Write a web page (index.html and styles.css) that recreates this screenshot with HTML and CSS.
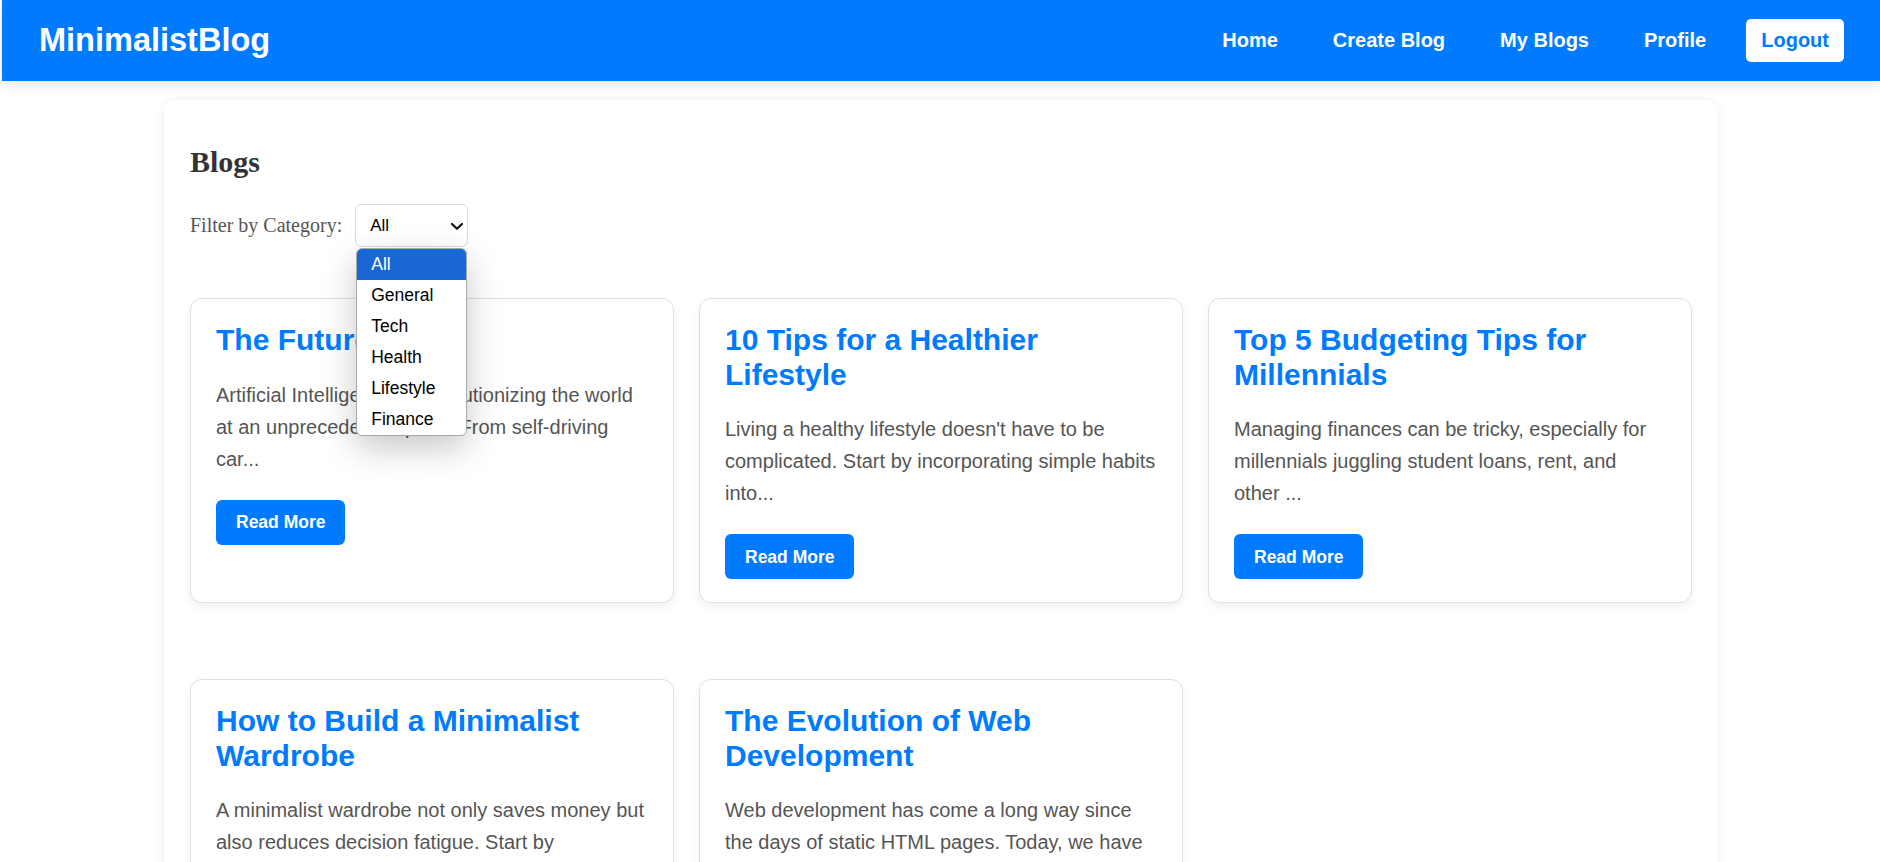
FILE: index.html
```html
<!DOCTYPE html>
<html lang="en">
<head>
<meta charset="utf-8">
<title>MinimalistBlog</title>
<link rel="stylesheet" href="styles.css">
</head>
<body>
<header class="topbar">
  <a class="logo" href="#">MinimalistBlog</a>
  <nav class="nav">
    <a class="nav-link" href="#">Home</a>
    <a class="nav-link" href="#">Create Blog</a>
    <a class="nav-link" href="#">My Blogs</a>
    <a class="nav-link" href="#">Profile</a>
    <a class="nav-link logout" href="#">Logout</a>
  </nav>
</header>

<main class="panel">
  <h2 class="panel-title">Blogs</h2>
  <div class="filter">
    <label class="filter-label" for="cat">Filter by Category:</label>
    <div class="select-wrap">
      <select id="cat" class="select">
        <option>All</option>
        <option>General</option>
        <option>Tech</option>
        <option>Health</option>
        <option>Lifestyle</option>
        <option>Finance</option>
      </select>
      <svg class="chevron" width="12" height="7" viewBox="0 0 12 7"><polyline points="1,1 6,5.8 11,1" fill="none" stroke="#111" stroke-width="2.2" stroke-linecap="round" stroke-linejoin="round"/></svg>
      <ul class="listbox">
        <li class="opt selected">All</li>
        <li class="opt">General</li>
        <li class="opt">Tech</li>
        <li class="opt">Health</li>
        <li class="opt">Lifestyle</li>
        <li class="opt">Finance</li>
      </ul>
    </div>
  </div>

  <div class="grid">
    <article class="card">
      <h3 class="card-title">The Future of AI</h3>
      <p class="card-text">Artificial Intelligence is revolutionizing the world at an unprecedented pace. From self-driving car...</p>
      <a class="btn" href="#">Read More</a>
    </article>
    <article class="card">
      <h3 class="card-title">10 Tips for a Healthier Lifestyle</h3>
      <p class="card-text">Living a healthy lifestyle doesn't have to be complicated. Start by incorporating simple habits into...</p>
      <a class="btn" href="#">Read More</a>
    </article>
    <article class="card">
      <h3 class="card-title">Top 5 Budgeting Tips for Millennials</h3>
      <p class="card-text">Managing finances can be tricky, especially for millennials juggling student loans, rent, and other ...</p>
      <a class="btn" href="#">Read More</a>
    </article>
    <article class="card">
      <h3 class="card-title">How to Build a Minimalist Wardrobe</h3>
      <p class="card-text">A minimalist wardrobe not only saves money but also reduces decision fatigue. Start by decluttering ...</p>
      <a class="btn" href="#">Read More</a>
    </article>
    <article class="card">
      <h3 class="card-title">The Evolution of Web Development</h3>
      <p class="card-text">Web development has come a long way since the days of static HTML pages. Today, we have powerful fr...</p>
      <a class="btn" href="#">Read More</a>
    </article>
  </div>
</main>
</body>
</html>
```

FILE: styles.css
```css
html {
  scrollbar-width: none;
}

body {
  margin: 0;
  background: #ffffff;
  font-family: "Liberation Serif", "Times New Roman", serif;
}

.topbar {
  margin-left: 2px;
  height: 81px;
  padding: 0 36px 0 37px;
  box-sizing: border-box;
  background: #007bff;
  display: flex;
  align-items: center;
  justify-content: space-between;
  box-shadow: 0 4px 12px rgba(0, 0, 0, 0.1);
  position: relative;
  z-index: 2;
}

.logo {
  font-family: "Liberation Sans", Arial, sans-serif;
  font-weight: bold;
  font-size: 32.5px;
  color: #ffffff;
  text-decoration: none;
}

.nav {
  display: flex;
  align-items: center;
  gap: 25px;
}

.nav-link {
  font-family: "Liberation Sans", Arial, sans-serif;
  font-weight: bold;
  font-size: 20px;
  line-height: 23px;
  color: #ffffff;
  text-decoration: none;
  padding: 10px 15px;
  border-radius: 5px;
}

.logout {
  background: #ffffff;
  color: #007bff;
}

.panel {
  margin: 19px 163px 0 164px;
  padding: 26px 25px 26px 26px;
  background: #ffffff;
  border-radius: 10px;
  box-shadow: 0 0 10px rgba(0, 0, 0, 0.07);
}

.panel-title {
  margin: 19px 0 25px;
  font-size: 30px;
  line-height: 34px;
  font-weight: bold;
  color: #333333;
}

.filter {
  display: flex;
  align-items: center;
  gap: 13px;
  margin-bottom: 51px;
}

.filter-label {
  font-size: 20px;
  line-height: 23px;
  color: #555555;
}

.select-wrap {
  position: relative;
  width: 113px;
  height: 43px;
}

.select {
  appearance: none;
  -webkit-appearance: none;
  width: 113px;
  height: 43px;
  box-sizing: border-box;
  margin: 0;
  padding: 0 24px 0 14px;
  border: 1px solid #dcdcdc;
  border-radius: 6px;
  background: #ffffff;
  color: #000000;
  font-family: "Liberation Sans", Arial, sans-serif;
  font-size: 17px;
}

.chevron {
  position: absolute;
  right: 5px;
  top: 19px;
  pointer-events: none;
}

.listbox {
  position: absolute;
  top: 44px;
  left: 1px;
  width: 111px;
  box-sizing: border-box;
  margin: 0;
  padding: 0;
  list-style: none;
  background: #ffffff;
  border: 1px solid #a8a8a8;
  border-radius: 6px;
  overflow: hidden;
  box-shadow: 0 12px 34px rgba(0, 0, 0, 0.22);
  z-index: 5;
}

.opt {
  height: 31px;
  line-height: 31px;
  padding-left: 14px;
  font-family: "Liberation Sans", Arial, sans-serif;
  font-size: 17.5px;
  color: #000000;
}

.opt.selected {
  background: #1967d2;
  color: #ffffff;
}

.grid {
  display: grid;
  grid-template-columns: repeat(3, 1fr);
  column-gap: 25px;
  row-gap: 76px;
}

.card {
  border: 1px solid #e0e0e0;
  border-radius: 12px;
  padding: 24px 24px 23px 25px;
  background: #ffffff;
  box-shadow: 0 4px 10px rgba(0, 0, 0, 0.06);
  font-family: "Liberation Sans", Arial, sans-serif;
}

.card-title {
  margin: 0 0 21px;
  font-size: 30px;
  line-height: 34.5px;
  font-weight: bold;
  color: #007bff;
}

.card-text {
  margin: 0 0 25px;
  font-size: 20px;
  line-height: 32px;
  color: #555555;
}

.btn {
  display: inline-block;
  padding: 12.5px 20px;
  background: #007bff;
  color: #ffffff;
  font-weight: bold;
  font-size: 17.5px;
  line-height: 20px;
  text-decoration: none;
  border-radius: 6px;
}
```
